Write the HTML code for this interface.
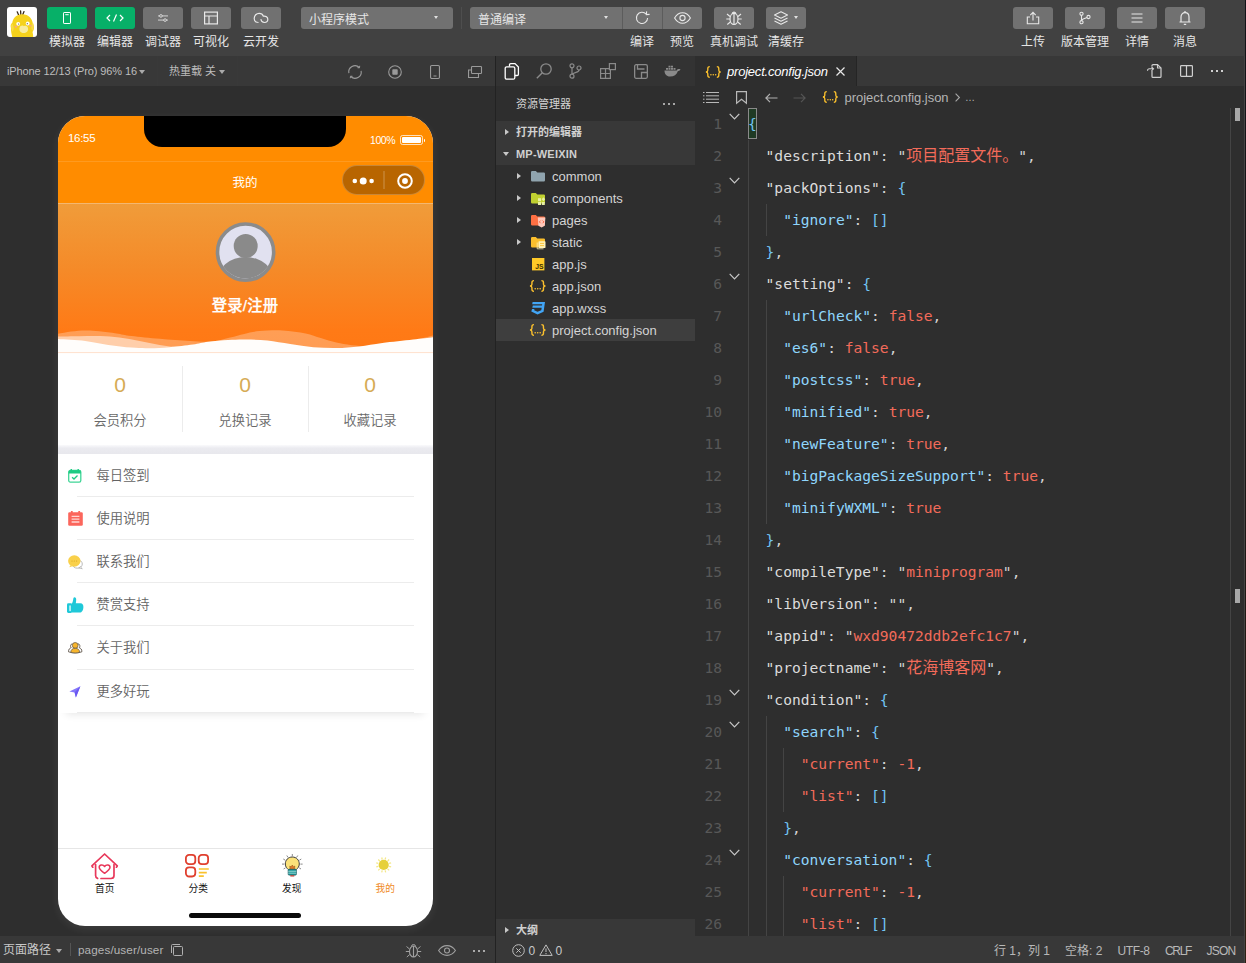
<!DOCTYPE html>
<html lang="zh-CN">
<head>
<meta charset="utf-8">
<title>微信开发者工具</title>
<style>
*{box-sizing:border-box;margin:0;padding:0}
html,body{width:1246px;height:963px;overflow:hidden;background:#2e2e2e}
body{position:relative;font-family:"Liberation Sans","Noto Sans CJK SC",sans-serif;font-size:12px;color:#d8d8d8;-webkit-font-smoothing:antialiased}
.abs{position:absolute}
svg{display:block;overflow:visible}
/* ---------- top toolbar ---------- */
#top{position:absolute;left:0;top:0;width:1246px;height:56px;background:#414141}
.tbtn{position:absolute;top:7px;height:22px;border-radius:3px;background:#717171}
.tbtn.g{background:#07b068}
.tbtn svg{position:absolute;left:50%;top:50%;transform:translate(-50%,-50%)}
.tlab{position:absolute;top:34px;height:16px;line-height:16px;font-size:12px;color:#e6e6e6;text-align:center;white-space:nowrap;transform:translateX(-50%)}
.sel{position:absolute;top:7px;height:22px;border-radius:3px;background:#717171;color:#e6e6e6;font-size:12px;line-height:27px;padding-left:8px}
.caret{position:absolute;width:0;height:0;border-left:2.500px solid transparent;border-right:2.500px solid transparent;border-top:3.500px solid #e0e0e0}
/* ---------- simulator ---------- */
#simbar{position:absolute;left:0;top:56px;width:495px;height:30px;background:#383838}
#simbot{position:absolute;left:0;top:936px;width:495px;height:27px;background:#383838}
#vsep{position:absolute;left:495px;top:56px;width:1px;height:907px;background:#222}
#phone{position:absolute;left:57.600px;top:116px;width:375.400px;height:810.400px;border-radius:27px;background:#fff;overflow:hidden;box-shadow:0 3px 10px rgba(255,255,255,.08)}
#pin{position:absolute;left:.4px;top:0;width:374px;height:810px}

.num{position:absolute;top:254px;width:124px;text-align:center;font-size:21px;line-height:30px;color:#d6ab55}
.nl{position:absolute;top:294px;width:124px;text-align:center;font-size:13.300px;line-height:22px;color:#686868;font-weight:350}
.li{position:absolute;left:0;width:374px;height:43.200px}
.li .ic{position:absolute;left:9px;top:14px;width:16px;height:16px;display:flex;align-items:center;justify-content:center}
.li .lt{position:absolute;left:38.500px;top:11.600px;font-size:13.300px;line-height:22px;color:#636363;font-weight:350}
.ti{position:absolute;top:735px;width:0;height:28px;display:flex;align-items:center;justify-content:center}
.ti svg{flex:none}
.tt{position:absolute;top:766px;width:60px;margin-left:-30px;text-align:center;font-size:9.700px;line-height:14px}
/* ---------- sidebar ---------- */
#actbar{position:absolute;left:496px;top:56px;width:199px;height:30px;background:#333}
#side{position:absolute;left:496px;top:86px;width:199px;height:850px;background:#2e2e2e}
.sec{position:absolute;left:0;width:199px;height:22px;background:#383838;font-weight:bold;font-size:11px;line-height:22px;color:#d0d0d0;padding-left:20px}
.row{position:absolute;left:0;width:199px;height:22px;line-height:23.500px;font-size:13px;color:#d4d4d4;padding-left:56px;white-space:nowrap}
.row.sel2{background:#3e3e3e}
.tri-r{position:absolute;width:0;height:0;border-top:3.5px solid transparent;border-bottom:3.5px solid transparent;border-left:4.5px solid #c8c8c8}
.tri-d{position:absolute;width:0;height:0;border-left:3.5px solid transparent;border-right:3.5px solid transparent;border-top:4.5px solid #c8c8c8}

.fic{position:absolute;left:34px;top:4px;width:16px;height:15px;display:flex;align-items:center;justify-content:center;line-height:14px}
.st{top:7px;font-size:12px;line-height:16px;color:#b8b8b8;white-space:nowrap}
/* ---------- editor ---------- */
#tabs{position:absolute;left:696px;top:56px;width:550px;height:30px;background:#383838}
#tab{position:absolute;left:0;top:0;width:161px;height:30px;background:#2e2e2e;border-right:1px solid #252525}
#crumbs{position:absolute;left:696px;top:86px;width:550px;height:21px;background:#2e2e2e}
#code{position:absolute;left:696px;top:108px;width:550px;height:828px;overflow:hidden;background:#2e2e2e}
.ln{position:absolute;left:0;width:26px;text-align:right;font-family:"DejaVu Sans Mono","Liberation Mono",monospace;font-size:14.6px;line-height:32px;height:32px;color:#585858}
.cl{position:absolute;left:52px;height:32px;line-height:32px;font-family:"DejaVu Sans Mono","Liberation Mono","Noto Sans CJK SC",monospace;font-size:14.6px;white-space:pre;color:#d4d4d4}
.k1{color:#dcdcdc}.k2{color:#8fd6fd}.k3{color:#f36b5a}.s{color:#f36b5a}.p{color:#d4d4d4}.b{color:#72c4f3}
.cj{font-size:16px}
.guide{position:absolute;width:1px;background:#444}
.fold{position:absolute;left:33px;width:11px;height:7px}
#status{position:absolute;left:496px;top:936px;width:750px;height:27px;background:#383838}
</style>
</head>
<body>
<div id="top">
<div class="abs" style="left:7px;top:7px;width:30px;height:30px;border-radius:3px;background:#fff;overflow:hidden">
<svg width="30" height="30" viewBox="7 7 30 30">
<path d="M18.500 14.800 L17.200 11.800 M20.800 14.400 L20.600 11 M22.800 14.600 L24 11.600" stroke="#3a2a18" stroke-width="1.300" stroke-linecap="round" fill="none"/>
<path d="M22 14.300 C29 14.300 32.500 19 32.800 24 C34.500 26 34.200 30 32.500 32 C33 34 33.300 36 33.300 38 H12.500 C11.500 34 10.800 31 11 28 C10.300 26 10.800 23.500 12.200 23 C13 18 16.500 14.300 22 14.300Z" fill="#f5d21c"/>
<path d="M12 23.500 C10.500 25 10.800 29.500 12.800 31.500 C14 30 14 25.500 12 23.500Z M32.600 22.500 C34.300 24 34.200 28.500 32.300 30.500 C31 29 31 24.500 32.600 22.500Z" fill="#f7dc4a"/>
<circle cx="18.200" cy="23.800" r="1.900" fill="#fff"/><circle cx="27.700" cy="23.500" r="1.900" fill="#fff"/>
<circle cx="18.600" cy="24" r=".6" fill="#555"/><circle cx="27.300" cy="23.700" r=".6" fill="#555"/>
<ellipse cx="16" cy="26.700" rx="1.300" ry=".9" fill="#f6a58a"/><ellipse cx="30.300" cy="25.700" rx="1.300" ry=".9" fill="#f6a58a"/>
<path d="M19.500 28 C20 25.500 23 25 24 26.200 C25.500 25.200 28 26 28 28.500 C28.500 31 26.500 33 23.500 33 C20.500 33 19 30.500 19.500 28Z" fill="#f8ec9e"/>
</svg></div>
<div class="tbtn g" style="left:47px;width:40px"><svg width="8" height="12" viewBox="0 0 8 12"><rect x=".5" y=".5" width="7" height="11" rx=".6" fill="none" stroke="#fff" stroke-width="1"/><path d="M2.300 2.700h3.400" stroke="#fff" stroke-width="1"/></svg></div>
<div class="tbtn g" style="left:95px;width:40px"><svg width="18" height="8" viewBox="0 0 18 8"><path d="M4 1 L1 4 L4 7 M14 1 L17 4 L14 7 M10.5 .5 L7.5 7.5" fill="none" stroke="#fff" stroke-width="1.2"/></svg></div>
<div class="tbtn" style="left:143px;width:40px"><svg width="10" height="8.300" viewBox="0 0 12 10"><path d="M0 2.5h12M0 7.5h12" stroke="#e8e8e8" stroke-width="1"/><circle cx="3.5" cy="2.5" r="1.6" fill="#717171" stroke="#e8e8e8"/><circle cx="8.5" cy="7.5" r="1.6" fill="#717171" stroke="#e8e8e8"/></svg></div>
<div class="tbtn" style="left:191px;width:40px"><svg width="14" height="13" viewBox="0 0 14 13"><rect x=".6" y=".6" width="12.8" height="11.8" fill="none" stroke="#e8e8e8" stroke-width="1.2"/><path d="M.6 4.5h12.8M5 4.5v8" stroke="#e8e8e8" stroke-width="1.2" fill="none"/></svg></div>
<div class="tbtn" style="left:241px;width:40px"><svg width="15" height="11" viewBox="0 0 15 11"><path d="M5 10 C2.5 10 .7 8.3 .7 6 C.7 3 3 .8 5.6 .8 C7.8 .8 9.3 2 9.8 3.6 C12.4 3.2 14.3 4.8 14.3 6.8 C14.3 8.6 12.8 10 11 10 C9 10 7.3 8.5 7.6 6.6" fill="none" stroke="#e8e8e8" stroke-width="1.2"/></svg></div>
<div class="tlab" style="left:67px">模拟器</div>
<div class="tlab" style="left:115px">编辑器</div>
<div class="tlab" style="left:163px">调试器</div>
<div class="tlab" style="left:211px">可视化</div>
<div class="tlab" style="left:261px">云开发</div>
<div class="sel" style="left:301px;width:152px">小程序模式<i class="caret" style="left:133px;top:9px"></i></div>
<div class="abs" style="left:461px;top:7px;width:1px;height:22px;background:#4e4e4e"></div>
<div class="sel" style="left:470px;width:232px">普通编译<i class="caret" style="left:134px;top:9px"></i>
<i class="abs" style="left:152px;top:0;width:1px;height:22px;background:#5c5c5c"></i>
<i class="abs" style="left:192px;top:0;width:1px;height:22px;background:#5c5c5c"></i>
<svg class="abs" style="left:165px;top:4px" width="15" height="14" viewBox="0 0 15 14"><path d="M11.2 3.2 A5.6 5.6 0 1 0 12.6 7" fill="none" stroke="#e8e8e8" stroke-width="1.1"/><path d="M11.6 .4 L11.4 3.6 L14.6 3.4" fill="none" stroke="#e8e8e8" stroke-width="1.1"/></svg>
<svg class="abs" style="left:204px;top:5px" width="17" height="12" viewBox="0 0 17 12"><path d="M.6 6 C3 2 5.5 .8 8.5 .8 C11.5 .8 14 2 16.4 6 C14 10 11.5 11.2 8.5 11.2 C5.5 11.2 3 10 .6 6 Z" fill="none" stroke="#e8e8e8" stroke-width="1.1"/><circle cx="8.5" cy="6" r="2.6" fill="none" stroke="#e8e8e8" stroke-width="1.1"/></svg>
</div>
<div class="tbtn" style="left:714px;width:40px"><svg width="17" height="15" viewBox="0 0 17 15"><ellipse cx="8.5" cy="8.5" rx="4" ry="5.5" fill="none" stroke="#e8e8e8" stroke-width="1.2"/><path d="M8.5 3v11" stroke="#e8e8e8" stroke-width="1.2"/><path d="M6.5 3.5 A2 2 0 0 1 10.500 3.5" fill="#e8e8e8" stroke="#e8e8e8"/><path d="M4.500 6 L1.500 3.500 M4.500 8.500 H.8 M4.800 11.500 L1.800 14 M12.500 6 L15.500 3.500 M12.500 8.500 H16.200 M12.200 11.500 L15.200 14" stroke="#e8e8e8" stroke-width="1.1" fill="none"/></svg></div>
<div class="tbtn" style="left:766px;width:40px"><svg style="left:15px" width="15" height="14" viewBox="0 0 15 14"><path d="M7.500 .8 L14 4 L7.500 7.200 L1 4 Z M1 7 L7.500 10.200 L14 7 M1 10 L7.500 13.200 L14 10" fill="none" stroke="#e8e8e8" stroke-width="1.1" stroke-linejoin="round"/></svg><i class="caret" style="left:28px;top:9px"></i></div>
<div class="tlab" style="left:642px">编译</div>
<div class="tlab" style="left:682px">预览</div>
<div class="tlab" style="left:734px">真机调试</div>
<div class="tlab" style="left:786px">清缓存</div>
<div class="tbtn" style="left:1013px;width:40px"><svg width="13" height="13" viewBox="0 0 13 13"><path d="M3.500 5.500 H.8 V12.200 H12.200 V5.500 H9.500" fill="none" stroke="#e8e8e8" stroke-width="1.1"/><path d="M6.500 9 V1 M3.800 3.600 L6.500 .9 L9.200 3.600" fill="none" stroke="#e8e8e8" stroke-width="1.1"/></svg></div>
<div class="tbtn" style="left:1065px;width:40px"><svg width="12" height="13" viewBox="0 0 12 13"><circle cx="2.500" cy="2.300" r="1.600" fill="none" stroke="#e8e8e8" stroke-width="1.100"/><circle cx="2.500" cy="10.700" r="1.600" fill="none" stroke="#e8e8e8" stroke-width="1.100"/><circle cx="9.500" cy="5.500" r="1.600" fill="none" stroke="#e8e8e8" stroke-width="1.100"/><path d="M2.500 3.900 V9.100 M2.500 9 C3 7.500 5.500 6.800 8 6" fill="none" stroke="#e8e8e8" stroke-width="1.100"/></svg></div>
<div class="tbtn" style="left:1117px;width:40px"><svg width="11" height="10" viewBox="0 0 11 10"><path d="M0 1h11M0 5h11M0 9h11" stroke="#e8e8e8" stroke-width="1.200"/></svg></div>
<div class="tbtn" style="left:1165px;width:40px"><svg width="13" height="15" viewBox="0 0 13 15"><path d="M1 11.500 H12 M2.500 11.500 V6.500 C2.500 3.800 4.300 2.200 6.500 2.200 C8.700 2.200 10.500 3.800 10.500 6.500 V11.500" fill="none" stroke="#e8e8e8" stroke-width="1.200"/><path d="M6.500 2.200 V.6 M5.300 13.800 H7.700" stroke="#e8e8e8" stroke-width="1.300"/></svg></div>
<div class="tlab" style="left:1033px">上传</div>
<div class="tlab" style="left:1085px">版本管理</div>
<div class="tlab" style="left:1137px">详情</div>
<div class="tlab" style="left:1185px">消息</div>
</div>
<div id="simbar">
<div class="abs" style="left:7px;top:7px;font-size:11px;line-height:16px;color:#bdbdbd;white-space:nowrap;letter-spacing:-.11px" id="devtxt">iPhone 12/13 (Pro) 96% 16</div>
<i class="caret" style="left:139px;top:14px;border-top-color:#aaa;border-width:4px 3px 0 3px"></i>
<div class="abs" style="left:157px;top:0;width:1px;height:30px;background:#393939"></div>
<div class="abs" style="left:237px;top:0;width:1px;height:30px;background:#393939"></div>
<div class="abs" style="left:169px;top:7px;font-size:11px;line-height:16px;color:#bdbdbd;white-space:nowrap">热重载 关</div>
<i class="caret" style="left:219px;top:14px;border-top-color:#aaa;border-width:4px 3px 0 3px"></i>
<svg class="abs" style="left:348px;top:9px" width="14" height="14" viewBox="0 0 14 14"><path d="M.9 8.200 A6.200 6.200 0 0 1 11.300 2.500 M13.100 5.800 A6.200 6.200 0 0 1 2.700 11.500" fill="none" stroke="#9a9a9a" stroke-width="1.100"/><path d="M11.700 .8 L11.500 2.800 L9.500 2.700 M2.300 13.200 L2.500 11.200 L4.500 11.300" fill="none" stroke="#9a9a9a" stroke-width="1"/></svg>
<svg class="abs" style="left:388px;top:9px" width="14" height="14" viewBox="0 0 14 14"><circle cx="7" cy="7" r="6.300" fill="none" stroke="#9a9a9a" stroke-width="1.100"/><rect x="4.300" y="4.300" width="5.400" height="5.400" rx=".8" fill="#9a9a9a"/></svg>
<svg class="abs" style="left:430px;top:9px" width="10" height="14" viewBox="0 0 10 14"><rect x=".55" y=".55" width="8.900" height="12.900" rx="1.200" fill="none" stroke="#9a9a9a" stroke-width="1.100"/><path d="M3.500 11h3" stroke="#9a9a9a" stroke-width="1"/></svg>
<svg class="abs" style="left:468px;top:10px" width="14" height="12" viewBox="0 0 14 12"><rect x="3.500" y=".55" width="10" height="7" rx=".8" fill="none" stroke="#9a9a9a" stroke-width="1.100"/><path d="M3.500 4 H.55 V11.450 H10.500 V7.600" fill="none" stroke="#9a9a9a" stroke-width="1.100"/></svg>
</div>
<div id="phone"><div id="pin">
<div class="abs" style="left:-2px;top:0;width:379px;height:87px;background:#ff8c00"></div>
<div class="abs" style="left:-2px;top:45px;width:379px;height:1px;background:rgba(255,255,255,.12)"></div>
<div class="abs" style="left:86px;top:-20px;width:202px;height:51px;background:#000;border-radius:18px"></div>
<div class="abs" style="left:10px;top:14px;font-size:11.500px;line-height:16px;color:#fff;letter-spacing:-.3px">16:55</div>
<div class="abs" style="left:312px;top:16px;font-size:10.500px;line-height:16px;color:#fff;letter-spacing:-.4px">100%</div>
<div class="abs" style="left:342px;top:19px;width:23px;height:10px;border:1px solid rgba(255,255,255,.75);border-radius:2.500px"><i class="abs" style="left:1px;top:1px;width:19px;height:6px;background:#fff;border-radius:1px"></i></div>
<div class="abs" style="left:366px;top:22.500px;width:1.500px;height:3px;background:#fff;border-radius:0 1px 1px 0"></div>
<div class="abs" style="left:0;top:57px;width:374px;text-align:center;font-size:12.500px;line-height:20px;color:#fff">我的</div>
<div class="abs" style="left:284px;top:49px;width:83px;height:30px;border-radius:15px;background:rgba(0,0,0,.28);border:1px solid rgba(255,255,255,.22)">
<svg class="abs" style="left:0;top:0" width="81" height="28" viewBox="0 0 81 28"><circle cx="11.800" cy="15" r="2.300" fill="#fff"/><circle cx="20.200" cy="15" r="3.500" fill="#fff"/><circle cx="28.600" cy="15" r="2.300" fill="#fff"/><path d="M41 5v18" stroke="rgba(255,255,255,.3)" stroke-width="1"/><circle cx="62" cy="15" r="6.800" fill="none" stroke="#fff" stroke-width="2"/><circle cx="62" cy="15" r="2.900" fill="#fff"/></svg>
</div>
<div class="abs" style="left:-2px;top:87px;width:379px;height:150px;background:linear-gradient(#f09c3a,#f58a28 45%,#ff7a16 85%,#ff7814)"></div>
<div class="abs" style="left:-2px;top:87px;width:379px;height:1px;background:rgba(255,255,255,.28)"></div>
<svg class="abs" style="left:157px;top:106px" width="61" height="61" viewBox="0 0 61 61"><defs><clipPath id="avc"><circle cx="30.600" cy="30.100" r="26.500"/></clipPath></defs><circle cx="30.600" cy="30.100" r="28.100" fill="#e1e1f0" stroke="#8b8b8b" stroke-width="3.600"/><g clip-path="url(#avc)" fill="#8a8a8a"><circle cx="30.700" cy="24" r="12"/><ellipse cx="30.600" cy="59" rx="28.500" ry="24"/></g></svg>
<div class="abs" style="left:0;top:179px;width:374px;text-align:center;font-size:15.400px;font-weight:500;line-height:22px;color:#fff;letter-spacing:.1px;-webkit-text-stroke:.25px #fff" id="login">登录/注册</div>
<svg class="abs" style="left:-1px;top:208px" width="376.500" height="30" viewBox="0 208 374 30" preserveAspectRatio="none">
<path d="M0.0 218.0 C2.3 217.6 9.2 216.1 14.0 215.5 C18.8 214.9 23.8 214.4 28.5 214.4 C33.2 214.3 36.9 214.7 42.0 215.2 C47.1 215.7 53.7 216.6 59.0 217.4 C64.3 218.2 66.8 219.1 74.0 220.0 C81.2 220.9 92.3 222.0 102.0 222.8 C111.7 223.6 123.3 224.6 132.0 225.0 C140.7 225.4 147.3 226.1 154.0 225.5 C160.7 224.9 166.7 222.8 172.0 221.5 C177.3 220.2 181.2 219.0 186.0 217.9 C190.8 216.8 194.7 215.7 201.0 215.1 C207.3 214.5 216.3 214.0 224.0 214.4 C231.7 214.8 240.7 216.1 247.0 217.4 C253.3 218.7 256.9 220.5 262.0 222.0 C267.1 223.5 272.4 225.4 277.5 226.6 C282.6 227.8 286.6 228.6 292.7 229.2 C298.8 229.8 305.8 230.4 314.0 230.0 C322.2 229.6 334.0 228.2 342.0 227.0 C350.0 225.8 356.7 223.8 362.0 222.5 C367.3 221.2 372.0 220.0 374.0 219.5 V238 H0Z" fill="rgba(255,255,255,.27)"/>
<path d="M0.0 220.5 C3.7 220.4 14.8 220.3 22.0 220.2 C29.2 220.1 36.3 219.8 43.0 220.0 C49.7 220.2 55.5 220.7 62.0 221.5 C68.5 222.3 75.3 223.8 82.0 225.0 C88.7 226.2 95.3 227.9 102.0 229.0 C108.7 230.1 115.3 231.1 122.0 231.8 C128.7 232.5 138.7 232.8 142.0 233.0 V238 H0Z" fill="rgba(255,255,255,.5)"/>
<path d="M0.0 223.0 C4.7 223.3 19.5 224.0 28.0 225.0 C36.5 226.0 43.3 227.8 51.0 228.9 C58.7 230.0 67.2 231.1 74.0 231.6 C80.8 232.2 85.7 232.3 92.0 232.2 C98.3 232.1 104.8 231.8 112.0 231.2 C119.2 230.6 128.7 229.5 135.0 228.6 C141.3 227.7 144.2 226.6 150.0 225.8 C155.8 225.0 163.7 224.4 170.0 224.0 C176.3 223.6 181.5 223.4 188.0 223.5 C194.5 223.6 201.7 223.8 209.0 224.6 C216.3 225.4 224.1 227.0 231.7 228.1 C239.3 229.2 247.0 230.5 254.6 231.2 C262.2 231.8 269.9 232.1 277.5 232.0 C285.1 231.9 292.8 231.2 300.4 230.4 C308.0 229.6 314.3 228.2 323.2 227.0 C332.1 225.8 345.2 224.5 353.7 223.5 C362.2 222.5 370.6 221.6 374.0 221.2 V238 H0Z" fill="#fffdfb"/>
</svg>
<div class="abs" style="left:-2px;top:236px;width:379px;height:1px;background:#ffe3d1"></div>
<div class="abs" style="left:124px;top:250px;width:1px;height:66px;background:#ececec"></div>
<div class="abs" style="left:250px;top:250px;width:1px;height:66px;background:#ececec"></div>
<div class="num" style="left:0">0</div><div class="num" style="left:125px">0</div><div class="num" style="left:250px">0</div>
<div class="nl" style="left:0">会员积分</div><div class="nl" style="left:125px">兑换记录</div><div class="nl" style="left:250px">收藏记录</div>
<div class="abs" style="left:-2px;top:329px;width:379px;height:9px;background:linear-gradient(#fafafc,#ebebf0 35%,#e8e8ed)"></div>
<div class="li" style="top:337.1px"><svg class="abs" style="left:10.500px;top:16.100px" width="13.500" height="13.800" viewBox="0 0 13.500 13.800"><rect x=".7" y="1.500" width="12.100" height="11.600" rx="1.600" fill="#fff" stroke="#3fd596" stroke-width="1.300"/><path d="M.7 2.800 a1.600 1.600 0 0 1 1.600 -1.600 h8.900 a1.600 1.600 0 0 1 1.600 1.600 v1.800 h-12.100z" fill="#1ecb84"/><path d="M3.300 0v2M10.200 0v2" stroke="#1ecb84" stroke-width="1.400"/><path d="M4.100 8.200 L6 10 L9.500 6.500" fill="none" stroke="#1ecb84" stroke-width="1.300"/></svg><span class="lt">每日签到</span></div>
<div class="abs" style="left:19px;top:379.7px;width:337px;height:1px;background:#ececec"></div>
<div class="li" style="top:380.3px"><svg class="abs" style="left:9.700px;top:15.100px" width="15" height="15" viewBox="0 0 15 15"><rect x=".2" y="1.200" width="14.600" height="13.600" rx="1.300" fill="#fb665c"/><path d="M3.600 5.400h7.800M3.600 8.200h7.800M3.600 11h7.800" stroke="#ffd6d2" stroke-width="1.300"/><path d="M3.800 0v2.400M11.200 0v2.400" stroke="#fb665c" stroke-width="1.800"/></svg><span class="lt">使用说明</span></div>
<div class="abs" style="left:19px;top:422.9px;width:337px;height:1px;background:#ececec"></div>
<div class="li" style="top:423.5px"><svg class="abs" style="left:10.100px;top:15.500px" width="15" height="14" viewBox="0 0 15 14"><ellipse cx="9.300" cy="9" rx="5" ry="4.200" fill="#fff" stroke="#a9a9a9" stroke-width=".8"/><path d="M12.300 11.800 L14.300 13.700 L10.800 12.900Z" fill="#fff" stroke="#a9a9a9" stroke-width=".7"/><ellipse cx="6.300" cy="6" rx="6.200" ry="5.700" fill="#f9d04a"/><path d="M2.300 10.300 L1.300 12.300 L4.300 11.300Z" fill="#f9d04a"/><circle cx="4" cy="6" r=".6" fill="#d9a520"/><circle cx="6.300" cy="6" r=".6" fill="#d9a520"/><circle cx="8.600" cy="6" r=".6" fill="#d9a520"/></svg><span class="lt">联系我们</span></div>
<div class="abs" style="left:19px;top:466.1px;width:337px;height:1px;background:#ececec"></div>
<div class="li" style="top:466.7px"><svg class="abs" style="left:8.800px;top:14.700px" width="16.400" height="16.200" viewBox="0 0 16.400 16.200"><path d="M4.400 7.200 C5.800 5.800 6 3.500 6.400 1.200 C6.700 -.2 9.200 -.2 9.200 2.600 C9.200 4 9 5.200 8.800 6.300 H13.300 C15.800 6.300 16.400 8.200 16.400 10 C16.400 13 15 15.600 12.800 15.600 H4.400Z" fill="#1fc8d8"/><rect x="0" y="6.300" width="5" height="9.600" rx="1.300" fill="#1fc8d8"/><rect x="2.300" y="8.200" width="1.500" height="6" rx=".7" fill="#d5f6f9"/></svg><span class="lt">赞赏支持</span></div>
<div class="abs" style="left:19px;top:509.3px;width:337px;height:1px;background:#ececec"></div>
<div class="li" style="top:509.9px"><svg class="abs" style="left:10px;top:16.500px" width="14.400" height="11.400" viewBox="0 0 14.400 11.400"><path d="M.5 9.800 C.5 7.300 1.600 6.200 3.200 5.700 C2 4.600 2.400 2 4.400 1.800 M13.900 9.800 C13.900 7.300 12.800 6.200 11.200 5.700 C12.400 4.600 12 2 10 1.800" fill="#fff" stroke="#5d5348" stroke-width=".9"/><path d="M.5 9.800 C4 11.300 10.400 11.300 13.900 9.800" fill="none" stroke="#5d5348" stroke-width=".9"/><circle cx="7.200" cy="3.400" r="2.900" fill="#f7b52c" stroke="#5d5348" stroke-width=".7"/><path d="M2.800 10.300 C2.800 7.600 4.600 6.300 7.200 6.300 C9.800 6.300 11.600 7.600 11.600 10.300 C9 11.200 5.400 11.200 2.800 10.300Z" fill="#f7b52c" stroke="#5d5348" stroke-width=".7"/></svg><span class="lt">关于我们</span></div>
<div class="abs" style="left:19px;top:552.5px;width:337px;height:1px;background:#ececec"></div>
<div class="li" style="top:553.1px"><svg class="abs" style="left:11px;top:16.900px" width="11.700" height="11.700" viewBox="0 0 11.700 11.700"><path d="M11.400 .3 L.4 5.600 L5.600 6.400 L6.900 11.400 Z" fill="#8577fa"/><path d="M11.400 .3 L5.600 6.400 L6.900 11.400Z" fill="#6a58f2"/></svg><span class="lt">更多好玩</span></div>
<div class="abs" style="left:19px;top:595.7px;width:337px;height:1px;background:#ececec"></div>

<div class="abs" style="left:0;top:597px;width:374px;height:20px;overflow:hidden"><div class="abs" style="left:8px;top:-10px;width:358px;height:10px;box-shadow:0 1px 9px rgba(0,0,0,.11)"></div></div>
<div class="abs" style="left:-2px;top:732px;width:379px;height:1px;background:#e6e6e6"></div>
<svg class="abs" style="left:33.3px;top:736.7px" width="27.200" height="26.400" viewBox="0 0 27.200 26.400"><path d="M1.800 14.200 L.9 12.900 L13.600 1 L26.300 12.900 L25.400 14.200" fill="none" stroke="#e8385a" stroke-width="1.700" stroke-linejoin="round" stroke-linecap="round"/><path d="M4.600 11.500 V22.500 a3 3 0 0 0 2 2.900 M10 25.500 H20 a3 3 0 0 0 3 -3 V11.500" fill="none" stroke="#e8385a" stroke-width="1.700" stroke-linecap="round"/><path d="M13.600 20.300 C10.300 18 8.200 16.300 8.200 14.200 C8.200 11.600 12 11 13.600 13.500 C15.200 11 19 11.600 19 14.200 C19 16.300 16.900 18 13.600 20.300Z" fill="none" stroke="#e8385a" stroke-width="1.500" stroke-linejoin="round"/></svg><div class="tt" style="left:46.75px;color:#111">首页</div>
<svg class="abs" style="left:127.5px;top:737.7px" width="24.500" height="23.500" viewBox="0 0 24.500 23.500"><rect x=".9" y=".9" width="9.400" height="9.200" rx="3.200" fill="none" stroke="#e0402f" stroke-width="1.800"/><rect x="13.700" y=".9" width="9.400" height="9.200" rx="3.200" fill="none" stroke="#e0402f" stroke-width="1.800"/><rect x=".9" y="13.300" width="9.400" height="9.200" rx="3.200" fill="none" stroke="#e0402f" stroke-width="1.800"/><path d="M13.800 15h10M13.800 18.600h8M13.800 22.100h5" stroke="#f9c22e" stroke-width="1.700"/></svg><div class="tt" style="left:140.25px;color:#111">分类</div>
<svg class="abs" style="left:223.8px;top:738.2px" width="20.600" height="22.800" viewBox="0 0 20.600 22.800"><path d="M10.300 0v2.200M4.800 1.500l1.200 1.900M15.800 1.500l-1.200 1.900M1.300 5l1.900 1.200M19.300 5l-1.900 1.200M0 10.100h2.200M20.600 10.100h-2.200M1.600 15l1.800-1.100M19 15l-1.800-1.100" stroke="#8a8a8a" stroke-width="1"/><path d="M10.300 3 C6 3 3.300 6.300 3.300 10 C3.300 12.800 5 14.300 6.300 15.600 H14.300 C15.600 14.300 17.300 12.800 17.300 10 C17.300 6.300 14.600 3 10.300 3Z" fill="#fbe27a" stroke="#3a3a3a" stroke-width="1"/><path d="M8 15.400 L7.800 12 L9 13 L10.300 11 L11.600 13 L12.800 12 L12.600 15.400Z" fill="#e07b2a" stroke="#8a4a10" stroke-width=".5"/><rect x="6.200" y="15.300" width="8.200" height="5.800" rx="1" fill="#1f9b9b" stroke="#1d5f66" stroke-width=".8"/><path d="M6.200 17.300h8.200M6.200 19.200h8.200" stroke="#bfe9e6" stroke-width=".7"/><path d="M8.300 21.300h4v1.100h-4z" fill="#c0392b"/></svg><div class="tt" style="left:233.75px;color:#111">发现</div>
<svg class="abs" style="left:318.2px;top:741.2px" width="15.400" height="15.800" viewBox="0 0 15.400 15.800"><path d="M13.11 9.35L15.14 9.89M11.66 11.86L13.14 13.34M9.15 13.31L9.69 15.34M6.25 13.31L5.71 15.34M3.74 11.86L2.26 13.34M2.29 9.35L0.26 9.89M2.29 6.45L0.26 5.91M3.74 3.94L2.26 2.46M6.25 2.49L5.71 0.46M9.15 2.49L9.69 0.46M11.66 3.94L13.14 2.46M13.11 6.45L15.14 5.91" stroke="#f4e88a" stroke-width="1.300"/><circle cx="7.700" cy="7.900" r="5.100" fill="#e6d03a"/></svg><div class="tt" style="left:327.25px;color:#f08a24">我的</div>

<div class="abs" style="left:131px;top:797px;width:112px;height:5px;border-radius:3px;background:#0a0a0a"></div>
</div></div>
<div id="simbot">
<div class="abs" style="left:3px;top:6px;font-size:12px;line-height:16px;color:#c8c8c8;white-space:nowrap">页面路径</div>
<i class="caret" style="left:56px;top:13px;border-top-color:#aaa;border-width:4px 3px 0 3px"></i>
<div class="abs" style="left:70px;top:7px;width:1px;height:13px;background:#555"></div>
<div class="abs" style="left:78px;top:6px;font-size:11.700px;line-height:16px;color:#b4b4b4;white-space:nowrap;letter-spacing:.11px" id="pathtxt">pages/user/user</div>
<svg class="abs" style="left:171px;top:8px" width="12" height="12" viewBox="0 0 12 12"><rect x="2.500" y="2.500" width="9" height="9" rx="1" fill="none" stroke="#b0b0b0" stroke-width="1"/><path d="M.5 9V1.500a1 1 0 0 1 1-1H9" fill="none" stroke="#b0b0b0" stroke-width="1"/></svg>
<svg class="abs" style="left:405px;top:7px" width="17" height="15" viewBox="0 0 17 15"><ellipse cx="8.500" cy="8.500" rx="4" ry="5.500" fill="none" stroke="#a0a0a0" stroke-width="1.100"/><path d="M8.500 3v11" stroke="#a0a0a0" stroke-width="1.100"/><path d="M6.500 3.500 A2 2 0 0 1 10.500 3.500" fill="none" stroke="#a0a0a0"/><path d="M4.500 6 L1.500 3.500 M4.500 8.500 H.8 M4.800 11.500 L1.800 14 M12.500 6 L15.500 3.500 M12.500 8.500 H16.200 M12.200 11.500 L15.200 14" stroke="#a0a0a0" stroke-width="1" fill="none"/></svg>
<svg class="abs" style="left:438px;top:9px" width="18" height="11" viewBox="0 0 18 11"><path d="M.6 5.500 C3 1.800 6 .6 9 .6 C12 .6 15 1.800 17.400 5.500 C15 9.200 12 10.400 9 10.400 C6 10.400 3 9.200 .6 5.500 Z" fill="none" stroke="#a0a0a0" stroke-width="1.100"/><circle cx="9" cy="5.500" r="2.500" fill="none" stroke="#a0a0a0" stroke-width="1.100"/></svg>
<div class="abs" style="left:473px;top:14px;width:2px;height:2px;background:#aaa;box-shadow:5px 0 #aaa,10px 0 #aaa"></div>
</div>
<div id="vsep"></div>
<div id="actbar">
<svg class="abs" style="left:8px;top:7px" width="16" height="17" viewBox="0 0 16 17"><path d="M5.500 3.500 V1.800 a1.200 1.200 0 0 1 1.200 -1.200 H11 L14.400 4 V11.300 a1.200 1.200 0 0 1 -1.200 1.200 H11" fill="none" stroke="#fff" stroke-width="1.300"/><rect x="1.200" y="3.800" width="9.600" height="12.400" rx="1.500" fill="none" stroke="#fff" stroke-width="1.300"/></svg>
<svg class="abs" style="left:40px;top:7px" width="16" height="16" viewBox="0 0 16 16"><circle cx="10" cy="6" r="5.200" fill="none" stroke="#8a8a8a" stroke-width="1.300"/><path d="M6.300 9.700 L.8 15.200" stroke="#8a8a8a" stroke-width="1.400"/></svg>
<svg class="abs" style="left:73px;top:7px" width="13" height="16" viewBox="0 0 13 16"><circle cx="3" cy="2.800" r="2" fill="none" stroke="#8a8a8a" stroke-width="1.200"/><circle cx="3" cy="13.200" r="2" fill="none" stroke="#8a8a8a" stroke-width="1.200"/><circle cx="10" cy="5" r="2" fill="none" stroke="#8a8a8a" stroke-width="1.200"/><path d="M3 4.800 V11.200 M10 7 C10 9.500 6 9 3.300 11.200" fill="none" stroke="#8a8a8a" stroke-width="1.200"/></svg>
<svg class="abs" style="left:104px;top:7px" width="16" height="16" viewBox="0 0 16 16"><path d="M.6 5.600 H10.400 V15.400 H.6 Z M5.500 5.600 V15.400 M.6 10.500 H10.400" fill="none" stroke="#8a8a8a" stroke-width="1.200"/><rect x="9.400" y=".6" width="6" height="6" fill="#333" stroke="#8a8a8a" stroke-width="1.200"/></svg>
<svg class="abs" style="left:138px;top:8px" width="14" height="15" viewBox="0 0 14 15"><rect x=".65" y=".65" width="12.700" height="13.700" rx="1.500" fill="none" stroke="#8a8a8a" stroke-width="1.300"/><path d="M3.500 .65 V5 H10.500 M13.350 8.500 H7.500 V14.350" fill="none" stroke="#8a8a8a" stroke-width="1.300"/></svg>
<svg class="abs" style="left:168px;top:9px" width="17" height="12" viewBox="0 0 17 12"><path d="M.5 5.500 H12.800 C13.200 4.300 14.400 3.800 16.500 4.300 C15.800 5.800 14.800 6.200 13.800 6.200 C12.800 9.500 10 11.500 6 11.500 C2.500 11.500 .5 9 .5 5.500Z" fill="#8a8a8a"/><path d="M2 4.800h2v-1.800h-2zM4.500 4.800h2v-1.800h-2zM7 4.800h2v-1.800h-2zM4.500 2.500h2v-1.800h-2zM7 2.500h2v-1.800h-2zM9.500 4.800h2v-1.800h-2z" fill="#8a8a8a"/></svg>
</div>
<div id="side">
<div class="abs" style="left:20px;top:10px;font-size:11px;line-height:16px;color:#d4d4d4">资源管理器</div>
<div class="abs" style="left:167px;top:16.500px;width:2px;height:2px;border-radius:1px;background:#d0d0d0;box-shadow:5px 0 #d0d0d0,10px 0 #d0d0d0"></div>
<div class="sec" style="top:35px"><i class="tri-r" style="left:9px;top:7.500px"></i>打开的编辑器</div>
<div class="sec" style="top:57px;letter-spacing:.2px"><i class="tri-d" style="left:7px;top:9px"></i>MP-WEIXIN</div>
<div class="row" style="top:79px"><i class="tri-r" style="left:21px;top:7.500px"></i><span class="fic"><svg width="14" height="12" viewBox="0 0 14 12"><path d="M0 1.200 a1.200 1.200 0 0 1 1.200 -1.200 H4.800 L6.300 1.400 H12.800 a1.200 1.200 0 0 1 1.200 1.200 V9.200 a1.200 1.200 0 0 1 -1.200 1.200 H1.200 a1.200 1.200 0 0 1 -1.200 -1.200Z" fill="#90a4ae"/></svg></span><span class="rt">common</span></div>
<div class="row" style="top:101px"><i class="tri-r" style="left:21px;top:7.500px"></i><span class="fic"><svg width="14" height="12" viewBox="0 0 14 12"><path d="M0 1.200 a1.200 1.200 0 0 1 1.200 -1.200 H4.800 L6.300 1.400 H12.800 a1.200 1.200 0 0 1 1.200 1.200 V9.200 a1.200 1.200 0 0 1 -1.200 1.200 H1.200 a1.200 1.200 0 0 1 -1.200 -1.200Z" fill="#c0d030"/><g fill="#e9f0a4" stroke="#2e2e2e" stroke-width=".0"><rect x="7" y="5.200" width="3" height="3"/><rect x="7" y="9" width="3" height="3"/><rect x="10.800" y="9" width="3" height="3"/><path d="M12.300 4.200 L14.500 6.700 L12.300 9.200 L10.100 6.700Z" transform="scale(.8) translate(3.200 1.200)"/></g></svg></span><span class="rt">components</span></div>
<div class="row" style="top:123px"><i class="tri-r" style="left:21px;top:7.500px"></i><span class="fic"><svg width="14" height="12" viewBox="0 0 14 12"><path d="M0 1.200 a1.200 1.200 0 0 1 1.200 -1.200 H4.800 L6.300 1.400 H12.800 a1.200 1.200 0 0 1 1.200 1.200 V9.200 a1.200 1.200 0 0 1 -1.200 1.200 H1.200 a1.200 1.200 0 0 1 -1.200 -1.200Z" fill="#ff7043"/><path d="M6.800 2.600 H14.400 L13.800 10.800 L10.600 12.400 L7.400 10.800Z" fill="#ffc9ba"/><path d="M9.600 5.600 L8.300 6.900 L9.600 8.200 M11.600 5.600 L12.900 6.900 L11.600 8.200" fill="none" stroke="#ff5a36" stroke-width=".9"/></svg></span><span class="rt">pages</span></div>
<div class="row" style="top:145px"><i class="tri-r" style="left:21px;top:7.500px"></i><span class="fic"><svg width="14" height="12" viewBox="0 0 14 12"><path d="M0 1.200 a1.200 1.200 0 0 1 1.200 -1.200 H4.800 L6.300 1.400 H12.800 a1.200 1.200 0 0 1 1.200 1.200 V9.200 a1.200 1.200 0 0 1 -1.200 1.200 H1.200 a1.200 1.200 0 0 1 -1.200 -1.200Z" fill="#fbbf2d"/><path d="M6.200 5.500 V11.800 H12.500" fill="none" stroke="#fff2b8" stroke-width=".8"/><rect x="7.500" y="4.300" width="7" height="6.600" rx=".6" fill="#fff2b8"/><path d="M9 6.400 H13 M9 8.600 H13" stroke="#fbbf2d" stroke-width=".9"/></svg></span><span class="rt">static</span></div>
<div class="row" style="top:167px"><span class="fic"><svg width="12.400" height="12.400" viewBox="0 0 12.400 12.400"><rect width="12.400" height="12.400" fill="#ffca28"/><text x="11.600" y="10.800" text-anchor="end" font-family="Liberation Sans,sans-serif" font-weight="bold" font-size="6.800" fill="#3d3000">JS</text></svg></span><span class="rt">app.js</span></div>
<div class="row" style="top:189px"><span class="fic"><svg width="17.400" height="12" viewBox="0 0 16 12" preserveAspectRatio="none" style="position:relative;top:-1px;left:-.6px;flex:none"><path d="M4.600 .7 C3.100 .7 2.700 1.300 2.700 2.500 V4.200 C2.700 5.300 2.100 5.900 .9 6 C2.100 6.100 2.700 6.700 2.700 7.800 V9.500 C2.700 10.700 3.100 11.300 4.600 11.300 M11.400 .7 C12.900 .7 13.300 1.300 13.300 2.500 V4.200 C13.300 5.300 13.900 5.900 15.100 6 C13.900 6.100 13.300 6.700 13.300 7.800 V9.500 C13.300 10.700 12.900 11.300 11.400 11.300" fill="none" stroke="#fbc02d" stroke-width="1.300"/><circle cx="5.700" cy="8.700" r=".75" fill="#fbc02d"/><circle cx="8" cy="8.700" r=".75" fill="#fbc02d"/><circle cx="10.300" cy="8.700" r=".75" fill="#fbc02d"/></svg></span><span class="rt">app.json</span></div>
<div class="row" style="top:211px"><span class="fic"><svg width="14" height="12.400" viewBox="0 0 14 12.400" style="position:relative;top:-.8px;flex:none"><path d="M1.600 0 H14 L12.600 9.800 L6.500 12.400 L.3 9.600 L1 7 H3.400 L3.200 8.300 L6.500 9.800 L10.300 8.300 L10.700 5.800 H1.300 L1.800 3.500 H11 L11.200 2.300 H1.200Z" fill="#42a5f5"/></svg></span><span class="rt">app.wxss</span></div>
<div class="row sel2" style="top:233px"><span class="fic"><svg width="17.400" height="12" viewBox="0 0 16 12" preserveAspectRatio="none" style="position:relative;top:-1px;left:-.6px;flex:none"><path d="M4.600 .7 C3.100 .7 2.700 1.300 2.700 2.500 V4.200 C2.700 5.300 2.100 5.900 .9 6 C2.100 6.100 2.700 6.700 2.700 7.800 V9.500 C2.700 10.700 3.100 11.300 4.600 11.300 M11.400 .7 C12.900 .7 13.300 1.300 13.300 2.500 V4.200 C13.300 5.300 13.900 5.900 15.100 6 C13.900 6.100 13.300 6.700 13.300 7.800 V9.500 C13.300 10.700 12.900 11.300 11.400 11.300" fill="none" stroke="#fbc02d" stroke-width="1.300"/><circle cx="5.700" cy="8.700" r=".75" fill="#fbc02d"/><circle cx="8" cy="8.700" r=".75" fill="#fbc02d"/><circle cx="10.300" cy="8.700" r=".75" fill="#fbc02d"/></svg></span><span class="rt">project.config.json</span></div>

<div class="sec" style="top:833px;padding-left:20px"><i class="tri-r" style="left:9px;top:7.500px"></i>大纲</div>
</div>
<div id="tabs"><div id="tab">
<span class="abs" style="left:9.300px;top:9.500px"><svg width="16.600" height="12" viewBox="0 0 16 12" preserveAspectRatio="none"><path d="M4.600 .7 C3.100 .7 2.700 1.300 2.700 2.500 V4.200 C2.700 5.300 2.100 5.900 .9 6 C2.100 6.100 2.700 6.700 2.700 7.800 V9.500 C2.700 10.700 3.100 11.300 4.600 11.300 M11.400 .7 C12.900 .7 13.300 1.300 13.300 2.500 V4.200 C13.300 5.300 13.900 5.900 15.100 6 C13.900 6.100 13.300 6.700 13.300 7.800 V9.500 C13.300 10.700 12.900 11.300 11.400 11.300" fill="none" stroke="#fbc02d" stroke-width="1.300"/><circle cx="5.700" cy="8.700" r=".75" fill="#fbc02d"/><circle cx="8" cy="8.700" r=".75" fill="#fbc02d"/><circle cx="10.300" cy="8.700" r=".75" fill="#fbc02d"/></svg></span>
<span class="abs" style="left:31px;top:7.500px;font-size:13px;line-height:16px;font-style:italic;color:#fff;white-space:nowrap;letter-spacing:-.21px" id="tabtxt">project.config.json</span>
<svg class="abs" style="left:140px;top:10.500px" width="9" height="9" viewBox="0 0 9 9"><path d="M.5 .5 L8.500 8.500 M8.500 .5 L.5 8.500" stroke="#e8e8e8" stroke-width="1.200"/></svg>
</div>
<svg class="abs" style="left:451px;top:8px" width="15" height="14" viewBox="0 0 15 14"><path d="M5 2.500 V1.600 a1 1 0 0 1 1 -1 H10.500 L14 4 V12.400 a1 1 0 0 1 -1 1 H6 a1 1 0 0 1 -1 -1 V7" fill="none" stroke="#d0d0d0" stroke-width="1.200"/><path d="M10.500 .8 V4 H13.800" fill="none" stroke="#d0d0d0" stroke-width="1.100"/><path d="M6.500 4.800 H2.500 a2 2 0 0 0 -2 2 M4.500 2.800 L6.500 4.800 L4.500 6.800" fill="none" stroke="#d0d0d0" stroke-width="1.100"/></svg>
<svg class="abs" style="left:484px;top:9px" width="13" height="12" viewBox="0 0 13 12"><rect x=".6" y=".6" width="11.800" height="10.800" rx=".8" fill="none" stroke="#d0d0d0" stroke-width="1.200"/><path d="M6.500 .6 V11.400" stroke="#d0d0d0" stroke-width="1.200"/></svg>
<div class="abs" style="left:515px;top:14px;width:2px;height:2px;background:#d0d0d0;box-shadow:5px 0 #d0d0d0,10px 0 #d0d0d0"></div>
</div>
<div id="crumbs">
<svg class="abs" style="left:7px;top:6px" width="16" height="11" viewBox="0 0 16 11"><path d="M3 .5 H16 M3 3.800 H16 M3 7.200 H16 M3 10.500 H16" stroke="#b8b8b8" stroke-width="1"/><path d="M0 .5 H1.500 M0 3.800 H1.500 M0 7.200 H1.500 M0 10.500 H1.500" stroke="#b8b8b8" stroke-width="1"/></svg>
<svg class="abs" style="left:40px;top:4.500px" width="11" height="13" viewBox="0 0 11 13"><path d="M.6 .6 H10.400 V12.200 L5.500 8.200 L.6 12.200Z" fill="none" stroke="#b8b8b8" stroke-width="1.200"/></svg>
<svg class="abs" style="left:69px;top:6.500px" width="13" height="10" viewBox="0 0 13 10"><path d="M12.500 5 H1 M5 .8 L.9 5 L5 9.200" fill="none" stroke="#b0b0b0" stroke-width="1.200"/></svg>
<svg class="abs" style="left:97px;top:6.500px" width="13" height="10" viewBox="0 0 13 10"><path d="M.5 5 H12 M8 .8 L12.100 5 L8 9.200" fill="none" stroke="#555" stroke-width="1.200"/></svg>
<span class="abs" style="left:125.500px;top:5.200px"><svg width="16.600" height="12" viewBox="0 0 16 12" preserveAspectRatio="none"><path d="M4.600 .7 C3.100 .7 2.700 1.300 2.700 2.500 V4.200 C2.700 5.300 2.100 5.900 .9 6 C2.100 6.100 2.700 6.700 2.700 7.800 V9.500 C2.700 10.700 3.100 11.300 4.600 11.300 M11.400 .7 C12.900 .7 13.300 1.300 13.300 2.500 V4.200 C13.300 5.300 13.900 5.900 15.100 6 C13.900 6.100 13.300 6.700 13.300 7.800 V9.500 C13.300 10.700 12.900 11.300 11.400 11.300" fill="none" stroke="#fbc02d" stroke-width="1.300"/><circle cx="5.700" cy="8.700" r=".75" fill="#fbc02d"/><circle cx="8" cy="8.700" r=".75" fill="#fbc02d"/><circle cx="10.300" cy="8.700" r=".75" fill="#fbc02d"/></svg></span>
<span class="abs" style="left:148.500px;top:3.500px;font-size:13px;line-height:16px;color:#b4b4b4;white-space:nowrap;letter-spacing:-.04px" id="crumbtxt">project.config.json</span>
<svg class="abs" style="left:259px;top:6.500px" width="5" height="9" viewBox="0 0 5 9"><path d="M.6 .6 L4.400 4.500 L.6 8.400" fill="none" stroke="#a8a8a8" stroke-width="1.100"/></svg>
<span class="abs" style="left:269px;top:4px;font-size:10px;line-height:16px;color:#b4b4b4;letter-spacing:-.5px">…</span>
</div>
<div id="code"><div class="abs" style="left:52px;top:0;width:9px;height:31px;border:1px solid #8a8a8a;background:#1f3a24"></div>
<div class="guide" style="left:52px;top:32px;height:800px"></div>
<div class="guide" style="left:69.6px;top:96px;height:32px"></div>
<div class="guide" style="left:69.6px;top:192px;height:224px"></div>
<div class="guide" style="left:69.6px;top:608px;height:230px"></div>
<div class="guide" style="left:87.2px;top:640px;height:64px"></div>
<div class="guide" style="left:87.2px;top:768px;height:70px"></div>
<div class="ln" style="top:0px">1</div><svg class="fold" style="top:5px" viewBox="0 0 11 7"><path d="M.7 .8 L5.500 5.800 L10.300 .8" fill="none" stroke="#c8c8c8" stroke-width="1.200"/></svg><div class="cl" style="top:0px;left:52.00px"><span class="b">{</span></div>
<div class="ln" style="top:32px">2</div><div class="cl" style="top:32px;left:69.59px"><span class="k1">"description"</span><span class="p">: </span><span class="p">"</span><span class="s cj">项目配置文件。</span><span class="p">"</span><span class="p">,</span></div>
<div class="ln" style="top:64px">3</div><svg class="fold" style="top:69px" viewBox="0 0 11 7"><path d="M.7 .8 L5.500 5.800 L10.300 .8" fill="none" stroke="#c8c8c8" stroke-width="1.200"/></svg><div class="cl" style="top:64px;left:69.59px"><span class="k1">"packOptions"</span><span class="p">: </span><span class="b">{</span></div>
<div class="ln" style="top:96px">4</div><div class="cl" style="top:96px;left:87.19px"><span class="k2">"ignore"</span><span class="p">: </span><span class="b">[]</span></div>
<div class="ln" style="top:128px">5</div><div class="cl" style="top:128px;left:69.59px"><span class="b">}</span><span class="p">,</span></div>
<div class="ln" style="top:160px">6</div><svg class="fold" style="top:165px" viewBox="0 0 11 7"><path d="M.7 .8 L5.500 5.800 L10.300 .8" fill="none" stroke="#c8c8c8" stroke-width="1.200"/></svg><div class="cl" style="top:160px;left:69.59px"><span class="k1">"setting"</span><span class="p">: </span><span class="b">{</span></div>
<div class="ln" style="top:192px">7</div><div class="cl" style="top:192px;left:87.19px"><span class="k2">"urlCheck"</span><span class="p">: </span><span class="s">false</span><span class="p">,</span></div>
<div class="ln" style="top:224px">8</div><div class="cl" style="top:224px;left:87.19px"><span class="k2">"es6"</span><span class="p">: </span><span class="s">false</span><span class="p">,</span></div>
<div class="ln" style="top:256px">9</div><div class="cl" style="top:256px;left:87.19px"><span class="k2">"postcss"</span><span class="p">: </span><span class="s">true</span><span class="p">,</span></div>
<div class="ln" style="top:288px">10</div><div class="cl" style="top:288px;left:87.19px"><span class="k2">"minified"</span><span class="p">: </span><span class="s">true</span><span class="p">,</span></div>
<div class="ln" style="top:320px">11</div><div class="cl" style="top:320px;left:87.19px"><span class="k2">"newFeature"</span><span class="p">: </span><span class="s">true</span><span class="p">,</span></div>
<div class="ln" style="top:352px">12</div><div class="cl" style="top:352px;left:87.19px"><span class="k2">"bigPackageSizeSupport"</span><span class="p">: </span><span class="s">true</span><span class="p">,</span></div>
<div class="ln" style="top:384px">13</div><div class="cl" style="top:384px;left:87.19px"><span class="k2">"minifyWXML"</span><span class="p">: </span><span class="s">true</span></div>
<div class="ln" style="top:416px">14</div><div class="cl" style="top:416px;left:69.59px"><span class="b">}</span><span class="p">,</span></div>
<div class="ln" style="top:448px">15</div><div class="cl" style="top:448px;left:69.59px"><span class="k1">"compileType"</span><span class="p">: </span><span class="p">"</span><span class="s">miniprogram</span><span class="p">"</span><span class="p">,</span></div>
<div class="ln" style="top:480px">16</div><div class="cl" style="top:480px;left:69.59px"><span class="k1">"libVersion"</span><span class="p">: </span><span class="p">""</span><span class="p">,</span></div>
<div class="ln" style="top:512px">17</div><div class="cl" style="top:512px;left:69.59px"><span class="k1">"appid"</span><span class="p">: </span><span class="p">"</span><span class="s">wxd90472ddb2efc1c7</span><span class="p">"</span><span class="p">,</span></div>
<div class="ln" style="top:544px">18</div><div class="cl" style="top:544px;left:69.59px"><span class="k1">"projectname"</span><span class="p">: </span><span class="p">"</span><span class="s cj">花海博客网</span><span class="p">"</span><span class="p">,</span></div>
<div class="ln" style="top:576px">19</div><svg class="fold" style="top:581px" viewBox="0 0 11 7"><path d="M.7 .8 L5.500 5.800 L10.300 .8" fill="none" stroke="#c8c8c8" stroke-width="1.200"/></svg><div class="cl" style="top:576px;left:69.59px"><span class="k1">"condition"</span><span class="p">: </span><span class="b">{</span></div>
<div class="ln" style="top:608px">20</div><svg class="fold" style="top:613px" viewBox="0 0 11 7"><path d="M.7 .8 L5.500 5.800 L10.300 .8" fill="none" stroke="#c8c8c8" stroke-width="1.200"/></svg><div class="cl" style="top:608px;left:87.19px"><span class="k2">"search"</span><span class="p">: </span><span class="b">{</span></div>
<div class="ln" style="top:640px">21</div><div class="cl" style="top:640px;left:104.78px"><span class="k3">"current"</span><span class="p">: </span><span class="s">-1</span><span class="p">,</span></div>
<div class="ln" style="top:672px">22</div><div class="cl" style="top:672px;left:104.78px"><span class="k3">"list"</span><span class="p">: </span><span class="b">[]</span></div>
<div class="ln" style="top:704px">23</div><div class="cl" style="top:704px;left:87.19px"><span class="b">}</span><span class="p">,</span></div>
<div class="ln" style="top:736px">24</div><svg class="fold" style="top:741px" viewBox="0 0 11 7"><path d="M.7 .8 L5.500 5.800 L10.300 .8" fill="none" stroke="#c8c8c8" stroke-width="1.200"/></svg><div class="cl" style="top:736px;left:87.19px"><span class="k2">"conversation"</span><span class="p">: </span><span class="b">{</span></div>
<div class="ln" style="top:768px">25</div><div class="cl" style="top:768px;left:104.78px"><span class="k3">"current"</span><span class="p">: </span><span class="s">-1</span><span class="p">,</span></div>
<div class="ln" style="top:800px">26</div><div class="cl" style="top:800px;left:104.78px"><span class="k3">"list"</span><span class="p">: </span><span class="b">[]</span></div>

<div class="abs" style="left:534px;top:0;width:1px;height:830px;background:#444"></div>
<div class="abs" style="left:539px;top:0;width:5px;height:13px;background:#a8a8a8"></div>
<div class="abs" style="left:539px;top:481px;width:5px;height:14px;background:#a8a8a8"></div>
</div>
<div id="status">
<svg class="abs" style="left:15.500px;top:7.700px" width="13" height="13" viewBox="0 0 13 13"><circle cx="6.500" cy="6.500" r="5.800" fill="none" stroke="#c0c0c0" stroke-width="1"/><path d="M4.300 4.300 L8.700 8.700 M8.700 4.300 L4.300 8.700" stroke="#c0c0c0" stroke-width="1"/></svg>
<span class="abs" style="left:32.500px;top:7px;font-size:12px;line-height:16px;color:#c8c8c8">0</span>
<svg class="abs" style="left:42.500px;top:7.700px" width="14" height="12" viewBox="0 0 14 12"><path d="M7 .9 L13.200 11.400 H.8Z" fill="none" stroke="#c0c0c0" stroke-width="1"/><path d="M7 4.500 V8 M7 9 V10.200" stroke="#c0c0c0" stroke-width="1"/></svg>
<span class="abs" style="left:59.500px;top:7px;font-size:12px;line-height:16px;color:#c8c8c8">0</span>
<span class="abs st" style="left:498px">行 1，列 1</span>
<span class="abs st" style="left:569px">空格: 2</span>
<span class="abs st" style="left:621.5px;letter-spacing:-.4px">UTF-8</span>
<span class="abs st" style="left:669px;letter-spacing:-1.3px">CRLF</span>
<span class="abs st" style="left:710.5px;letter-spacing:-.75px">JSON</span>
</div>
<div class="abs" style="left:1244px;top:56px;width:1px;height:907px;background:#444"></div>
<div class="abs" style="left:1245px;top:0;width:1px;height:963px;background:linear-gradient(#121217,#1a1614 50%,#2e2012)"></div>
</body>
</html>
